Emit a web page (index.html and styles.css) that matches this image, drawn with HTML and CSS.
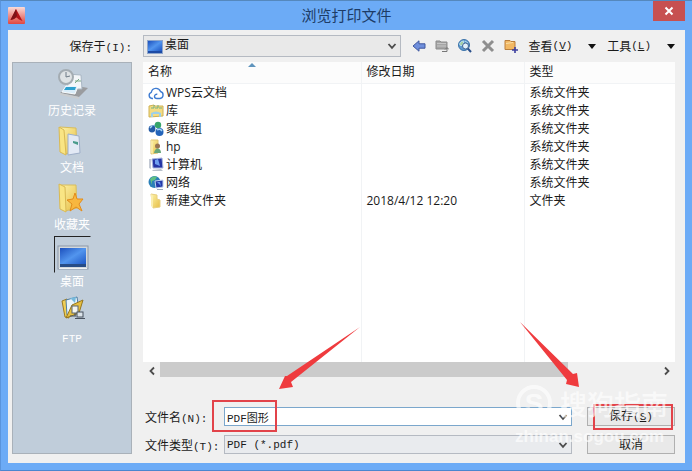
FILE: index.html
```
<!DOCTYPE html>
<html lang="zh-CN">
<head>
    <meta charset="UTF-8">
    <meta name="viewport" content="width=device-width, initial-scale=1.0">
    <link rel="stylesheet" href="styles.css">
    <title>浏览打印文件</title>
</head>
<body>
    <!-- shared shapes -->
    <svg class="defs" width="0" height="0" aria-hidden="true">
        <defs>
            <linearGradient id="yellow" x1="0" y1="0" x2="1" y2="1">
                <stop offset="0" stop-color="#fdf3a8"/>
                <stop offset="1" stop-color="#e6bd45"/>
            </linearGradient>
            <linearGradient id="screen" x1="0" y1="0" x2="1" y2="1">
                <stop offset="0" stop-color="#1c50bd"/>
                <stop offset="0.5" stop-color="#5295ee"/>
                <stop offset="1" stop-color="#1c55c4"/>
            </linearGradient>
            <linearGradient id="red" x1="0" y1="0" x2="0" y2="1">
                <stop offset="0" stop-color="#fbdcd8"/>
                <stop offset="1" stop-color="#e0463f"/>
            </linearGradient>
            <symbol id="chevron" viewBox="0 0 10 10">
                <path d="M1.5 3 L5 6.8 L8.5 3" fill="none" stroke="#4c4c4c" stroke-width="1.8"/>
            </symbol>
        </defs>
    </svg>

    <div class="window">
        <header class="titlebar">
            <svg class="logo" viewBox="0 0 17 17" width="17" height="17">
                <rect width="17" height="17" rx="1" fill="url(#red)"/>
                <path d="M8 2 L14.5 14 L11 12.5 L8.5 10.5 L6 12 L2.5 13 Z" fill="#b3131a"/>
                <path d="M8 2 L9 9 L6 12 L2.5 13 Z" fill="#7e1218"/>
            </svg>
            <h1 class="title">浏览打印文件</h1>
            <button class="close" type="button" aria-label="关闭">
                <svg viewBox="0 0 10 10" width="10" height="10"><path d="M1.5 1.5 L8.5 8.5 M8.5 1.5 L1.5 8.5" stroke="#fff" stroke-width="2"/></svg>
            </button>
        </header>

        <form class="dialog">
            <label class="look-label" for="folder">保存于<span class="key">(I):</span></label>

            <div class="toolbar">
                <div class="combo look">
                    <svg class="combo-icon" viewBox="0 0 16 14" width="16" height="14">
                        <rect x="0.5" y="0.5" width="15" height="13" fill="#1c4aa5" stroke="#8fa6cb"/>
                        <rect x="1" y="1" width="14" height="10" fill="url(#screen)"/>
                    </svg>
                    <select id="folder"><option>桌面</option></select>
                    <svg class="arrow" width="10" height="10"><use href="#chevron"/></svg>
                </div>
                <div class="tools">
                    <button type="button" aria-label="后退">
                        <svg viewBox="0 0 14 14" width="14" height="14"><path d="M1 7 L7 1.8 V4.8 H13 V9.2 H7 V12.2 Z" fill="#6f8fdc" stroke="#41589f"/></svg>
                    </button>
                    <button type="button" aria-label="上一级">
                        <svg viewBox="0 0 14 14" width="14" height="14">
                            <path d="M1 2 H5 L6 3 H12 V10 H1 Z" fill="#a5a5a5" stroke="#8b8b8b"/>
                            <path d="M2 4.5 H11 M2 7 H11" stroke="#c6c6c6"/>
                            <path d="M7 12.5 H12 V9 M10 10.5 L12 8.5 L14 10.5" fill="none" stroke="#777"/>
                        </svg>
                    </button>
                    <button type="button" aria-label="搜索">
                        <svg viewBox="0 0 14 14" width="14" height="14">
                            <circle cx="6" cy="6" r="5.5" fill="#5e9ad0" stroke="#3c73a9"/>
                            <path d="M1.5 5 Q3 1.5 6 2 L5 5 L3 7 Z M7 2 L10 4" fill="#a4d0a0" stroke="#b6dcec"/>
                            <circle cx="7.5" cy="7" r="3" fill="#e1f0fb" stroke="#446590"/>
                            <path d="M9.8 9.5 L13 13" stroke="#294f8b" stroke-width="2"/>
                        </svg>
                    </button>
                    <button type="button" aria-label="删除">
                        <svg viewBox="0 0 14 14" width="14" height="14"><path d="M2 2 L12 12 M12 2 L2 12" stroke="#8e8e8e" stroke-width="3"/></svg>
                    </button>
                    <button type="button" aria-label="新建文件夹">
                        <svg viewBox="0 0 14 14" width="14" height="14">
                            <path d="M1 1.5 H6 L7 2.5 H11 V10.5 H1 Z" fill="#f2b864" stroke="#bb7f3c"/>
                            <path d="M2 4.5 L9 3.5" stroke="#fae0a8"/>
                            <path d="M11 8 V14 M8 11 H14" stroke="#3c3f9f" stroke-width="1.6"/>
                        </svg>
                    </button>
                </div>
                <button class="menu" type="button">查看<span class="key">(<u>V</u>)</span><i></i></button>
                <button class="menu" type="button">工具<span class="key">(<u>L</u>)</span><i></i></button>
            </div>

            <nav class="places">
                <a href="#history">
                    <span class="pic"><svg viewBox="0 0 32 32" width="32" height="32">
                        <path d="M3 25 L22 29 L31 20 L15 17 Z" fill="#9a9c9f"/>
                        <path d="M3 25 L22 29 V31 L3 27 Z" fill="#c9cccf"/>
                        <path d="M10 6 L24 7 L25 21 L11 21 Z" fill="#f3f6f9" stroke="#a9b7c4"/>
                        <path d="M18 13 H24 M18 15 L22 11" stroke="#7ba989"/>
                        <circle cx="9" cy="9" r="7" fill="#dfe3e5" stroke="#a4acb2" stroke-width="2"/>
                        <path d="M9 4 V9 L13 8" fill="none" stroke="#6f7b86"/>
                        <path d="M9 18 L21 18 L18 26 L5 24 Z" fill="#d9edfa" stroke="#f8fbfd"/>
                        <path d="M9 19 H19 L18 22 L7 22 Z" fill="#2fa1cf"/>
                    </svg></span>
                    历史记录
                </a>
                <a href="#documents">
                    <span class="pic"><svg viewBox="0 0 32 32" width="32" height="32">
                        <path d="M3 2 L19 3 L20 26 L8 29 Z" fill="url(#yellow)" stroke="#d8bd5d"/>
                        <path d="M11 9 L22 11 L23 28 L11 30 Z" fill="#e2e9f5" stroke="#9eafc9"/>
                        <path d="M16 16 L21 17 V20 L16 18 Z" fill="#4a9b8c"/>
                        <path d="M2 2 L7 5 L9 30 L3 27 Z" fill="#f9e584" stroke="#d9b954"/>
                    </svg></span>
                    文档
                </a>
                <a href="#favorites">
                    <span class="pic"><svg viewBox="0 0 32 32" width="32" height="32">
                        <path d="M3 3 L19 3 L20 26 L8 29 Z" fill="url(#yellow)" stroke="#d8bd5d"/>
                        <path d="M2 2 L8 5 L9 30 L3 27 Z" fill="#f9e584" stroke="#d9b954"/>
                        <path d="M18 11 L20 17 L26 17 L22 22 L25 29 L19 25 L13 29 L15 22 L10 18 L16 17 Z" fill="#f8b73f" stroke="#e38c1b"/>
                    </svg></span>
                    收藏夹
                </a>
                <a href="#desktop" class="selected">
                    <span class="pic"><svg viewBox="0 0 32 32" width="32" height="32">
                        <rect x="1" y="7" width="30" height="23" fill="#d3d8dc" stroke="#8b98a7"/>
                        <rect x="3" y="9" width="26" height="17" fill="url(#screen)"/>
                        <rect x="3" y="25" width="26" height="3" fill="#274c86"/>
                        <path d="M2 29.5 H30" stroke="#eef1f4"/>
                    </svg></span>
                    桌面
                </a>
                <a href="#ftp">
                    <span class="pic"><svg viewBox="0 0 32 32" width="32" height="32">
                        <path d="M5 5 L10 3 L12 22 L8 21 Z" fill="#f0cf55" stroke="#9c7b22"/>
                        <path d="M9 4 L20 1 L22 15 L10 19 Z" fill="#e9f5fb" stroke="#4e7ca2"/>
                        <path d="M13 2 L19 1 L18 7 Z" fill="#76b9dc"/>
                        <path d="M9 22 L15 9 L26 4 L22 17 Z" fill="#e6bf3f" stroke="#94751f"/>
                        <rect x="15" y="10" width="6" height="7" fill="#f4f6f0" stroke="#5a6471"/>
                        <rect x="20" y="16" width="6" height="5" fill="#dbe3ea" stroke="#49525e"/>
                        <path d="M13 20 H19 M18 17 V20 M18 22.5 H28" stroke="#49525e"/>
                    </svg></span>
                    <span class="key">FTP</span>
                </a>
            </nav>

            <div class="files">
                <div class="list">
                    <table>
                        <colgroup><col class="col-name"><col class="col-date"><col></colgroup>
                        <thead>
                            <tr><th>名称<svg class="sort" viewBox="0 0 8 4" width="8" height="4"><path d="M0 4 L4 0 L8 4 Z" fill="#5f94bd"/></svg></th><th>修改日期</th><th>类型</th></tr>
                        </thead>
                        <tbody>
                            <tr>
                                <td><svg viewBox="0 0 16 16" width="16" height="16"><path d="M5 13.5 H4 A3.2 3.2 0 0 1 3.3 7.3 A4.8 4.8 0 0 1 12.5 6.5 A3.6 3.6 0 0 1 12 13.5 H9 Q6.5 13.5 6.5 11.5 Q6.7 9 9.3 9.3" fill="none" stroke="#3f7cd2" stroke-width="1.4"/></svg>WPS云文档</td>
                                <td></td><td>系统文件夹</td>
                            </tr>
                            <tr>
                                <td><svg viewBox="0 0 16 16" width="16" height="16">
                                    <path d="M1 3 L6 2 L7 3 H15 V13 L1 14 Z" fill="#f4dc83" stroke="#d0b254"/>
                                    <path d="M3 5 H6 V2 M7 5 H10 V2 M11 5 H14" stroke="#75b184" fill="none"/>
                                    <path d="M3 14 V10 Q8 7 13 10 V14 H11 V11 H5 V14 Z" fill="#9ed0e8"/>
                                </svg>库</td>
                                <td></td><td>系统文件夹</td>
                            </tr>
                            <tr>
                                <td><svg viewBox="0 0 16 16" width="16" height="16">
                                    <path d="M4 6 L10 3 L13 10" fill="none" stroke="#7bb3df" stroke-width="2"/>
                                    <circle cx="4" cy="8" r="3.4" fill="#255ba6"/>
                                    <circle cx="10" cy="4" r="3.2" fill="#38a56a"/>
                                    <circle cx="11.5" cy="11" r="4" fill="#2464ba"/>
                                    <path d="M2 7 L4 5 M9 9 Q12 7 14 10" stroke="#a7d7f4" stroke-width="1.5" fill="none"/>
                                </svg>家庭组</td>
                                <td></td><td>系统文件夹</td>
                            </tr>
                            <tr>
                                <td><svg viewBox="0 0 16 16" width="16" height="16">
                                    <path d="M3 1 H10 V14 L3 15 Z" fill="url(#yellow)" stroke="#dfc475"/>
                                    <path d="M3 1 L5 3 V15 L3 14 Z" fill="#f9eaa3"/>
                                    <circle cx="9.5" cy="7" r="2.5" fill="#987552"/>
                                    <path d="M6 14 Q7 9 10 9.5 Q13 10 13 14 Z" fill="#69a77a"/>
                                </svg>hp</td>
                                <td></td><td>系统文件夹</td>
                            </tr>
                            <tr>
                                <td><svg viewBox="0 0 16 16" width="16" height="16">
                                    <path d="M1 2 L3 2 V12 L1 11 Z" fill="#c3c9d4"/>
                                    <path d="M4 2 L14 1 L15 11 L5 11 Z" fill="#2535a5" stroke="#a6b4dd"/>
                                    <path d="M7 3 L10 2 L12 9 L7 7 Z" fill="#6f9ff0"/>
                                    <path d="M4 13 L13 12 L15 14 H5 Z" fill="#b9c1cc"/>
                                </svg>计算机</td>
                                <td></td><td>系统文件夹</td>
                            </tr>
                            <tr>
                                <td><svg viewBox="0 0 16 16" width="16" height="16">
                                    <circle cx="6.5" cy="7" r="6" fill="#2a7fb8"/>
                                    <path d="M2 4 Q5 0 9 2 L7 5 L4 6 L4 10 Z" fill="#5fbf83"/>
                                    <path d="M7 6 L15 5 V12 L8 13 Z" fill="#2339a8" stroke="#c0d0ee"/>
                                    <path d="M9 7 L12 7 L13 11 Z" fill="#6796ea"/>
                                    <path d="M9 14.5 H15" stroke="#9aa8bb"/>
                                </svg>网络</td>
                                <td></td><td>系统文件夹</td>
                            </tr>
                            <tr>
                                <td><svg viewBox="0 0 16 16" width="16" height="16">
                                    <path d="M3 1 L9 2 V6 L12 7 V14 L5 15 Z" fill="url(#yellow)" stroke="#e8d083"/>
                                    <path d="M3 1 L5 3 V15 L3 13 Z" fill="#fbeeb0"/>
                                </svg>新建文件夹</td>
                                <td>2018/4/12 12:20</td><td>文件夹</td>
                            </tr>
                            <tr class="rest"><td></td><td></td><td></td></tr>
                        </tbody>
                    </table>
                </div>
                <div class="scrollbar">
                    <button type="button" aria-label="向左"><svg viewBox="0 0 10 10" width="10" height="10"><path d="M7 1.5 L3.5 5 L7 8.5" fill="none" stroke="#4c4c4c" stroke-width="1.8"/></svg></button>
                    <div class="track"><div class="thumb"></div></div>
                    <button type="button" aria-label="向右"><svg viewBox="0 0 10 10" width="10" height="10"><path d="M3 1.5 L6.5 5 L3 8.5" fill="none" stroke="#4c4c4c" stroke-width="1.8"/></svg></button>
                </div>
                <div class="fields">
                    <label for="filename">文件名<span class="key">(N):</span></label>
                    <div class="combo edit">
                        <input type="text" id="filename" value="PDF图形">
                        <svg class="arrow" width="10" height="10"><use href="#chevron"/></svg>
                    </div>
                    <button class="btn" type="submit">保存<span class="key">(<u>S</u>)</span></button>
                    <label for="filetype">文件类型<span class="key">(T):</span></label>
                    <div class="combo">
                        <select id="filetype"><option>PDF (*.pdf)</option></select>
                        <svg class="arrow" width="10" height="10"><use href="#chevron"/></svg>
                    </div>
                    <button class="btn" type="button">取消</button>
                </div>
            </div>
        </form>

        <!-- marks and watermark over the dialog -->
        <svg class="marks" viewBox="0 0 692 471">
            <g fill="none" stroke="#e2434a" stroke-width="2">
                <rect x="213" y="401" width="63" height="30"/>
                <rect x="594" y="405" width="78" height="24"/>
            </g>
            <g fill="#ef3b3e">
                <path d="M360 327 L287 376 L285 376 L279 389 L293 387 L291 382 Z"/>
                <path d="M520 322 L567 380 L566 384 L579 387 L577 373 L573 374 Z"/>
            </g>
            <g class="watermark">
                <circle cx="534" cy="403" r="16" fill="none" stroke="#fff" stroke-width="4"/>
                <text class="wm-s" x="534" y="413" text-anchor="middle">S</text>
                <text class="wm-name" x="560" y="415">搜狗指南</text>
                <text class="wm-url" x="515" y="442">zhinan.sogou.com</text>
            </g>
        </svg>
    </div>
</body>
</html>
```
FILE: styles.css
```
*{
    box-sizing: border-box;
}
body{
    margin: 0;
    font-family: "Open Sans", "Noto Sans CJK SC", sans-serif;
    font-size: 12px;
    color: #1a1a1a;
}
button, input, select{
    font: inherit;
    color: inherit;
    margin: 0;
    padding: 0;
    border: none;
    border-radius: 0;
    background: none;
}
svg{
    flex: none;
}
.defs{
    position: absolute;
}
.window{
    position: relative;
    display: flex;
    flex-direction: column;
    min-height: 100vh;
    padding: 0 7px 7px;
    background-color: #6cabf6;
    border-top: 1px solid #5588bd;
    border-left: 1px solid #5a94dc;
    border-bottom: 1px solid #4b86cf;
}

/* title bar */
.titlebar{
    display: grid;
    grid-template-columns: 32px 1fr 32px;
    height: 29px;
}
.logo{
    margin-top: 6px;
}
.title{
    margin: 0;
    text-align: center;
    font-size: 15px;
    font-weight: 400;
    line-height: 28px;
    color: #1d3c66;
}
.close{
    display: flex;
    align-items: center;
    justify-content: center;
    height: 20px;
    background-color: #c75050;
}

/* dialog */
.dialog{
    flex: 1;
    display: grid;
    grid-template-columns: 120px 1fr;
    grid-template-rows: 22px 1fr;
    gap: 5px 11px;
    padding: 5px 10px 9px 4px;
    background-color: #f0f0f0;
}
.look-label{
    text-align: right;
    line-height: 24px;
}
.key{
    font-family: "Liberation Mono", monospace;
    font-size: 11px;
}
.toolbar{
    display: flex;
    align-items: center;
    justify-content: space-between;
}
.combo{
    position: relative;
    height: 19px;
    border: 1px solid #b5bac2;
    background-color: #e9ebee;
}
.combo input, .combo select{
    display: block;
    appearance: none;
    width: 100%;
    height: 100%;
    padding: 0 20px 0 2px;
    outline: none;
    font-family: "Liberation Mono", "Noto Sans CJK SC", monospace;
    font-size: 11px;
}
.combo .arrow{
    position: absolute;
    right: 3px;
    top: 4px;
    pointer-events: none;
}
.look{
    width: 258px;
    height: 22px;
    background-color: #e9e9e9;
}
.look select{
    padding-left: 21px;
    font-size: 12px;
    line-height: 16px;
}
.look .arrow{
    top: 5px;
}
.combo-icon{
    position: absolute;
    left: 3px;
    top: 4px;
}
.edit{
    background-color: #fff;
    border-color: #7ba7cc;
}
.tools{
    display: flex;
    gap: 9px;
}
.tools button{
    display: flex;
}
.menu{
    display: flex;
    align-items: center;
    white-space: nowrap;
}
.menu i{
    margin-left: 16px;
    border: 4px solid transparent;
    border-top: 5px solid #111;
    border-bottom: none;
}

/* places bar */
.places{
    display: flex;
    flex-direction: column;
    padding-top: 2px;
    background-color: #c0cdda;
    border: 1px solid #a9b1b9;
}
.places a{
    display: flex;
    flex-direction: column;
    align-items: center;
    height: 57px;
    color: #fff;
    line-height: 18px;
    text-decoration: none;
}
.pic{
    display: flex;
    width: 37px;
    height: 37px;
    padding: 2px;
    border: 1px solid transparent;
}
.selected .pic{
    border-top-color: #222;
    border-left-color: #222;
}

/* file list */
.files{
    display: flex;
    flex-direction: column;
}
.list{
    flex: 1;
    display: flex;
    background-color: #fff;
}
table{
    width: 100%;
    table-layout: fixed;
    border-collapse: collapse;
}
.col-name{
    width: 218px;
}
.col-date{
    width: 163px;
}
th, td{
    height: 18px;
    padding: 0 5px;
    text-align: left;
    font-weight: 400;
    line-height: 18px;
    border-right: 1px solid #f1f3f5;
}
th{
    position: relative;
    height: 21px;
    line-height: 20px;
    background-color: #fcfcfc;
    border-bottom: 1px solid #f1f3f5;
}
th:last-child, td:last-child{
    border-right: none;
}
.sort{
    position: absolute;
    left: 50%;
    top: 1px;
    margin-left: -4px;
}
td svg{
    margin-right: 2px;
    vertical-align: middle;
}
.rest td{
    height: auto;
}

/* horizontal scroll bar */
.scrollbar{
    display: flex;
    height: 17px;
}
.scrollbar button{
    display: flex;
    align-items: center;
    justify-content: center;
    width: 17px;
}
.track{
    flex: 1;
}
.thumb{
    width: 82%;
    height: 15px;
    background-color: #cbcbcb;
}

/* name, type and buttons */
.fields{
    display: grid;
    grid-template-columns: 79px 1fr 103px;
    grid-auto-rows: 19px;
    gap: 9px 0;
    padding: 28px 0 0 2px;
    align-items: center;
}
.fields label{
    padding-top: 4px;
    line-height: 15px;
    white-space: nowrap;
}
.btn{
    height: 19px;
    margin-left: 15px;
    border: 1px solid #b0b0b0;
    background-color: #e9e9e9;
    line-height: 15px;
}

/* overlay */
.marks{
    position: absolute;
    left: -1px;
    top: -1px;
    width: 100vw;
    height: 100vh;
    pointer-events: none;
}
.watermark{
    fill: #fff;
    opacity: 0.65;
}
.watermark text{
    font-family: "Liberation Sans", "Noto Sans CJK SC", sans-serif;
}
.wm-s{
    font-size: 28px;
    font-weight: 700;
}
.watermark .wm-name{
    font-size: 27px;
    font-weight: 500;
}
.watermark .wm-url{
    font-size: 17px;
    font-weight: 700;
}
```
